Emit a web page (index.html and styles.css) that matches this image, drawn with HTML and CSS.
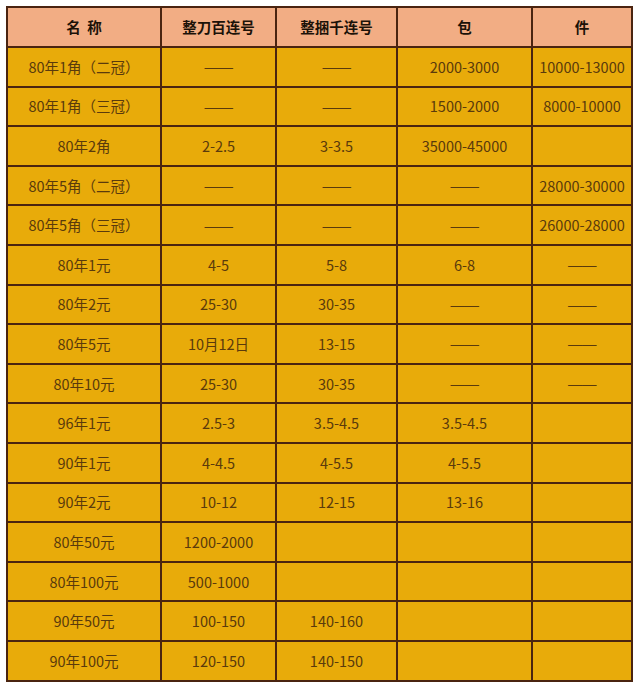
FILE: index.html
```html
<!DOCTYPE html>
<html lang="zh">
<head>
<meta charset="utf-8">
<title>价格表</title>
<link rel="stylesheet" href="styles.css">
</head>
<body>
<table class="price-table">
  <colgroup>
    <col class="c1"><col class="c2"><col class="c3"><col class="c4"><col class="c5">
  </colgroup>
  <thead>
    <tr><th>名&nbsp;&nbsp;称</th><th>整刀百连号</th><th>整捆千连号</th><th>包</th><th>件</th></tr>
  </thead>
  <tbody>
    <tr><td>80年1角（二冠）</td><td><span class="dash">——</span></td><td><span class="dash">——</span></td><td>2000-3000</td><td>10000-13000</td></tr>
    <tr><td>80年1角（三冠）</td><td><span class="dash">——</span></td><td><span class="dash">——</span></td><td>1500-2000</td><td>8000-10000</td></tr>
    <tr><td>80年2角</td><td>2-2.5</td><td>3-3.5</td><td>35000-45000</td><td></td></tr>
    <tr><td>80年5角（二冠）</td><td><span class="dash">——</span></td><td><span class="dash">——</span></td><td><span class="dash">——</span></td><td>28000-30000</td></tr>
    <tr><td>80年5角（三冠）</td><td><span class="dash">——</span></td><td><span class="dash">——</span></td><td><span class="dash">——</span></td><td>26000-28000</td></tr>
    <tr><td>80年1元</td><td>4-5</td><td>5-8</td><td>6-8</td><td><span class="dash">——</span></td></tr>
    <tr><td>80年2元</td><td>25-30</td><td>30-35</td><td><span class="dash">——</span></td><td><span class="dash">——</span></td></tr>
    <tr><td>80年5元</td><td>10月12日</td><td>13-15</td><td><span class="dash">——</span></td><td><span class="dash">——</span></td></tr>
    <tr><td>80年10元</td><td>25-30</td><td>30-35</td><td><span class="dash">——</span></td><td><span class="dash">——</span></td></tr>
    <tr><td>96年1元</td><td>2.5-3</td><td>3.5-4.5</td><td>3.5-4.5</td><td></td></tr>
    <tr><td>90年1元</td><td>4-4.5</td><td>4-5.5</td><td>4-5.5</td><td></td></tr>
    <tr><td>90年2元</td><td>10-12</td><td>12-15</td><td>13-16</td><td></td></tr>
    <tr><td>80年50元</td><td>1200-2000</td><td></td><td></td><td></td></tr>
    <tr><td>80年100元</td><td>500-1000</td><td></td><td></td><td></td></tr>
    <tr><td>90年50元</td><td>100-150</td><td>140-160</td><td></td><td></td></tr>
    <tr><td>90年100元</td><td>120-150</td><td>140-150</td><td></td><td></td></tr>
  </tbody>
</table>
</body>
</html>
```

FILE: styles.css
```css
html, body {
  margin: 0;
  padding: 0;
  background: #ffffff;
}
body {
  padding: 6px 0 0 6px;
  font-family: "Noto Sans CJK SC", "Noto Sans", sans-serif;
}
.price-table {
  border-collapse: collapse;
  table-layout: fixed;
  width: 625px;
  border: 2px solid #4a2410;
}
.c1 { width: 154px; }
.c2 { width: 115px; }
.c3 { width: 121px; }
.c4 { width: 135px; }
.c5 { width: 100px; }
.price-table th,
.price-table td {
  border: 2px solid #4a2410;
  text-align: center;
  vertical-align: middle;
  padding: 0;
  white-space: nowrap;
  line-height: 20px;
}
.price-table th {
  height: 38px;
  background: #f2ad84;
  color: #1c1208;
  font-weight: bold;
  font-size: 14.5px;
}
.price-table td {
  height: 37.6px;
  background: #e8ab0a;
  color: #5a3a0c;
  font-size: 14.5px;
}
.dash {
  font-family: "Liberation Sans", sans-serif;
  letter-spacing: -0.5px;
}
```
